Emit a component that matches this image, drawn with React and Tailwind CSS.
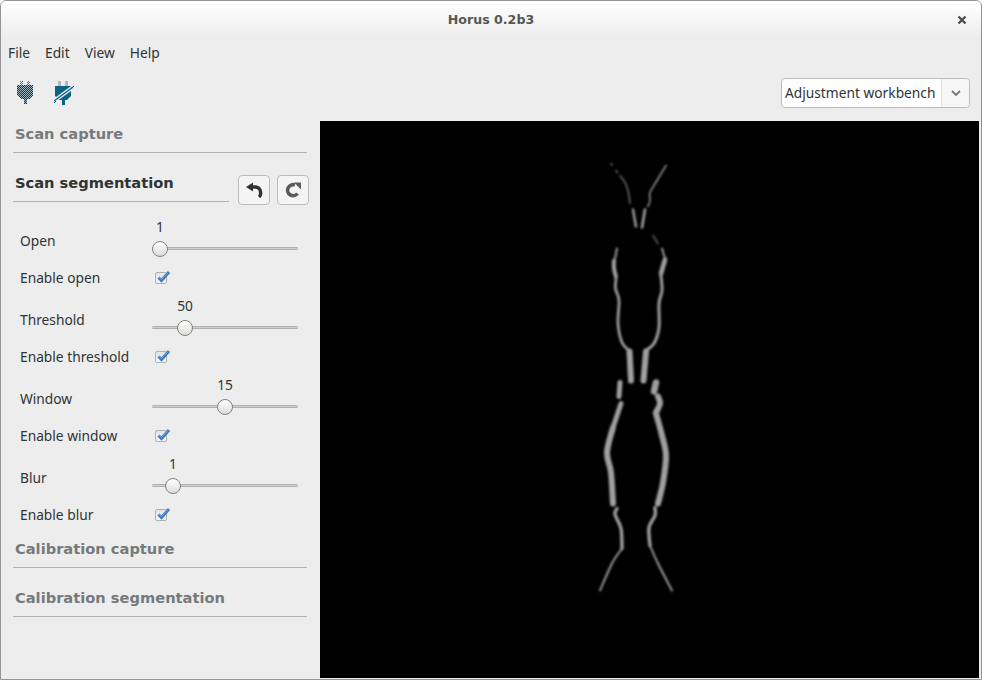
import React from "react";

const SANS = "font-['Noto_Sans',sans-serif]";

function Dither({ id, color }) {
  return (
    <pattern id={id} width="2" height="2" patternUnits="userSpaceOnUse">
      <rect x="0" y="0" width="1" height="1" fill={color} />
      <rect x="1" y="1" width="1" height="1" fill={color} />
    </pattern>
  );
}

function PlugOn() {
  return (
    <svg width="18" height="24" viewBox="0 0 18 24" shapeRendering="crispEdges">
      <defs>
        <Dither id="dpl" color="#003f5c" />
        <Dither id="dgr" color="#666" />
      </defs>
      <rect x="4" y="0" width="3" height="4" fill="url(#dgr)" />
      <rect x="11" y="0" width="3" height="4" fill="url(#dgr)" />
      <path d="M1 4H17V14L13 18H11V23H8V18H5L1 14Z" fill="#9fb4bd" />
      <path d="M1 4H17V14L13 18H11V23H8V18H5L1 14Z" fill="url(#dpl)" />
    </svg>
  );
}

function PlugOff() {
  return (
    <svg width="20" height="24" viewBox="0 0 20 24">
      <rect x="4" y="0" width="3" height="5" fill="#b5b5b5" />
      <rect x="11" y="0" width="3" height="5" fill="#b5b5b5" />
      <path d="M1 5H17V15L13 19H11V24H8V19H5L1 15Z" fill="#0b6284" />
      <path d="M0 20L19 6" stroke="#ededed" strokeWidth="4" />
      <path d="M0 20L19 6" stroke="#0b6284" strokeWidth="1.4" />
      <path d="M0 22L2 20M18 7L20 5" stroke="#0b6284" strokeWidth="1" />
    </svg>
  );
}

function Undo() {
  return (
    <svg width="18" height="18" viewBox="0 0 18 18">
      <path d="M8 1.5V10.5L1 6Z" fill="#2e3436" />
      <path d="M6 6H10A5 5 0 0 1 15.5 11A5 5 0 0 1 14 16" fill="none" stroke="#2e3436" strokeWidth="3.4" />
    </svg>
  );
}

function Redo() {
  return (
    <svg width="18" height="18" viewBox="0 0 18 18">
      <path d="M13.5 12.5A5.5 5.5 0 1 1 11 4" fill="none" stroke="#585b5c" strokeWidth="3.6" />
      <path d="M10 1.5H17V8.5Z" fill="#585b5c" />
    </svg>
  );
}

function Check() {
  return (
    <div className="relative w-[12px] h-[12px] ml-[3px] -mt-[1px] rounded-[2px] border border-[#b0b0b0] bg-[linear-gradient(#e4e4e4,#f6f6f6)]">
      <svg className="absolute left-[0px] top-[-4px]" width="15" height="15" viewBox="0 0 15 15">
        <path d="M2.5 8.5L5.5 11.5L13 3" fill="none" stroke="#3c78c2" strokeWidth="3" />
        <path d="M3 8.5L5.5 10.5L12 3.5" fill="none" stroke="#86aedd" strokeWidth="0.8" />
      </svg>
    </div>
  );
}

function Section({ title, active, box, children }) {
  return (
    <div className={`${box} border-b border-[#b3b3b3] flex-1`}>
      <div className={`pl-[2px] leading-[20px] text-[14.65px] font-bold font-['DejaVu_Sans',sans-serif] ${active ? "text-[#2e3436]" : "text-[#757a7c]"}`}>
        {title}
      </div>
      {children}
    </div>
  );
}

function SliderGroup({ label, value, thumb, check }) {
  return (
    <div className="h-[79px] pl-[7px]">
      <div className="flex h-[42px]">
        <div className="w-[132px] pt-[14px] leading-[20px]">{label}</div>
        <div className="relative w-[146px] h-[42px]">
          <div className="absolute top-0 h-[20px] w-[40px] -ml-[20px] text-center leading-[20px]" style={{ left: thumb }}>
            {value}
          </div>
          <div className="absolute left-0 right-0 top-[30px] h-[3px] rounded-full bg-[#cfcfcb] border-y border-[#b0b0ac]" />
          <div
            className="absolute top-[24px] w-[16px] h-[16px] -ml-[8px] rounded-full border border-[#7f827f] bg-[linear-gradient(#ffffff,#dcdcda)]"
            style={{ left: thumb }}
          />
        </div>
      </div>
      <div className="flex mt-[9px] h-[20px] items-center">
        <div className="w-[132px] leading-[20px]">{check}</div>
        <Check />
      </div>
    </div>
  );
}

function IconBtn({ children }) {
  return (
    <div className="w-[32px] h-[30px] flex items-center justify-center rounded-[4px] border border-[#bcbcbc] bg-[#f4f4f4]">
      {children}
    </div>
  );
}

// smooth curve through the traced outline points of the scan
function smooth(pts) {
  let d = `M${pts[0][0]} ${pts[0][1]}`;
  for (let i = 0; i < pts.length - 1; i++) {
    const p0 = pts[i - 1] || pts[i];
    const p1 = pts[i];
    const p2 = pts[i + 1];
    const p3 = pts[i + 2] || p2;
    const c1 = [p1[0] + (p2[0] - p0[0]) / 6, p1[1] + (p2[1] - p0[1]) / 6];
    const c2 = [p2[0] - (p3[0] - p1[0]) / 6, p2[1] - (p3[1] - p1[1]) / 6];
    d += `C${c1[0]} ${c1[1]} ${c2[0]} ${c2[1]} ${p2[0]} ${p2[1]}`;
  }
  return d;
}

const parts = [
  { w: 1.2, dash: "2 7", c: "#999", p: [[611, 163], [618, 173]] },
  { w: 1.2, c: "#8a8a8a", p: [[620, 175], [625, 182], [628, 190], [630, 203]] },
  { w: 1.5, c: "#999", p: [[666, 165], [657, 180], [650, 192], [650, 200], [648, 206]] },
  { w: 2.4, p: [[633, 209], [636, 226]] },
  { w: 2.6, p: [[645, 209], [642, 227]] },
  { w: 1.2, c: "#8a8a8a", p: [[653, 235], [658, 243]] },
  { w: 1.8, c: "#aaa", p: [[617, 248], [615, 258]] },
  { w: 4, p: [[614, 260], [614, 268], [616, 276]] },
  { w: 2.8, p: [[616, 278], [615.5, 288], [619, 300], [618, 323], [622, 342], [629, 350]] },
  { w: 1.8, c: "#aaa", p: [[662, 248], [665, 258]] },
  { w: 4.6, p: [[665, 259], [661, 273]] },
  { w: 3, p: [[661, 275], [662, 290], [659, 303], [659, 327], [654, 343], [646, 350]] },
  { w: 6, p: [[629.5, 351], [631, 380]] },
  { w: 6, p: [[646, 351], [643.5, 380]] },
  { w: 5, p: [[620, 382], [619, 396]] },
  { w: 6.5, p: [[656, 382], [654, 391]] },
  { w: 5, p: [[621, 403], [613, 427]] },
  { w: 6, p: [[613, 427], [607, 452], [611, 472], [613, 503]] },
  { w: 3.4, p: [[617, 508], [615, 514], [621, 528], [622, 548]] },
  { w: 1.8, c: "#aaa", p: [[622, 548], [612, 563], [600, 590]] },
  { w: 6, p: [[658, 396], [660, 403], [656, 412]] },
  { w: 6, p: [[656, 413], [662, 435], [666, 455], [663, 482], [658, 503]] },
  { w: 3.4, p: [[655, 507], [655, 515], [649, 527], [650, 545]] },
  { w: 1.8, c: "#aaa", p: [[650, 545], [658, 563], [672, 590]] },
];

export default function App() {
  return (
    <div className={`${SANS} w-[982px] h-[680px] flex flex-col overflow-hidden rounded-t-[6px] border border-[#959595] bg-[#ededed] text-[13.75px] text-[#2e3436]`}>
      <div className="relative h-[38px] shrink-0 flex items-center bg-[linear-gradient(#ffffff,#ededed)]">
        <div className="flex-1 text-center text-[12.6px] font-bold font-['DejaVu_Sans',sans-serif] text-[#555753]">Horus 0.2b3</div>
        <svg className="absolute right-[14px] top-[14px]" width="10" height="10" viewBox="0 0 10 10">
          <path d="M1.5 1.5L8.5 8.5M8.5 1.5L1.5 8.5" stroke="#4a4f50" strokeWidth="2.4" />
        </svg>
      </div>
      <div className="h-[28px] shrink-0 flex items-center pl-[7px] gap-[15px] leading-[20px]">
        <span>File</span>
        <span>Edit</span>
        <span>View</span>
        <span>Help</span>
      </div>
      <div className="h-[54px] shrink-0 flex items-center pb-[3px]">
        <div className="ml-[15px] w-[38px]"><PlugOn /></div>
        <div><PlugOff /></div>
        <div className="ml-auto mr-[11px] w-[189px] h-[30px] flex items-center rounded-[4px] border border-[#bcbcbc] bg-white">
          <div className="w-[159px] pl-[3px] whitespace-nowrap leading-[20px]">Adjustment workbench</div>
          <div className="flex-1 self-stretch flex items-center justify-center border-l border-[#e2e2e2] bg-[#f6f6f6] rounded-r-[4px]">
            <svg width="10" height="6" viewBox="0 0 10 6">
              <path d="M1 1L5 5L9 1" fill="none" stroke="#777" strokeWidth="1.8" />
            </svg>
          </div>
        </div>
      </div>
      <div className="flex-1 flex min-h-0 pb-[1px] pr-[2px]">
        <div className="w-[319px] shrink-0 pl-[12px] pr-[13px]">
          <div className="flex"><Section title="Scan capture" box="h-[32px] pt-[3px]" /></div>
          <div className="flex items-start gap-[9px] h-[64px] -mr-[2px]">
            <Section title="Scan segmentation" active box="h-[49px] pt-[20px]" />
            <div className="flex gap-[7px] mt-[22px]">
              <IconBtn><Undo /></IconBtn>
              <IconBtn><Redo /></IconBtn>
            </div>
          </div>
          <SliderGroup label="Open" value="1" thumb={8} check="Enable open" />
          <SliderGroup label="Threshold" value="50" thumb={33} check="Enable threshold" />
          <SliderGroup label="Window" value="15" thumb={73} check="Enable window" />
          <SliderGroup label="Blur" value="1" thumb={21} check="Enable blur" />
          <div className="flex"><Section title="Calibration capture" box="h-[35px] pt-[6px]" /></div>
          <div className="flex"><Section title="Calibration segmentation" box="h-[49px] pt-[20px]" /></div>
        </div>
        <div className="flex-1 bg-black">
          <svg className="block w-full h-full" viewBox="320 121 659 556">
            <defs>
              <filter id="soft" filterUnits="userSpaceOnUse" x="580" y="150" width="120" height="460" colorInterpolationFilters="sRGB">
                <feGaussianBlur stdDeviation="0.9" />
              </filter>
            </defs>
            <g filter="url(#soft)" fill="none" strokeLinecap="round" strokeLinejoin="round">
              {parts.map((p, i) => (
                <path key={i} d={smooth(p.p)} stroke={p.c || "#a0a0a0"} strokeWidth={p.w} strokeDasharray={p.dash} />
              ))}
            </g>
          </svg>
        </div>
      </div>
    </div>
  );
}
